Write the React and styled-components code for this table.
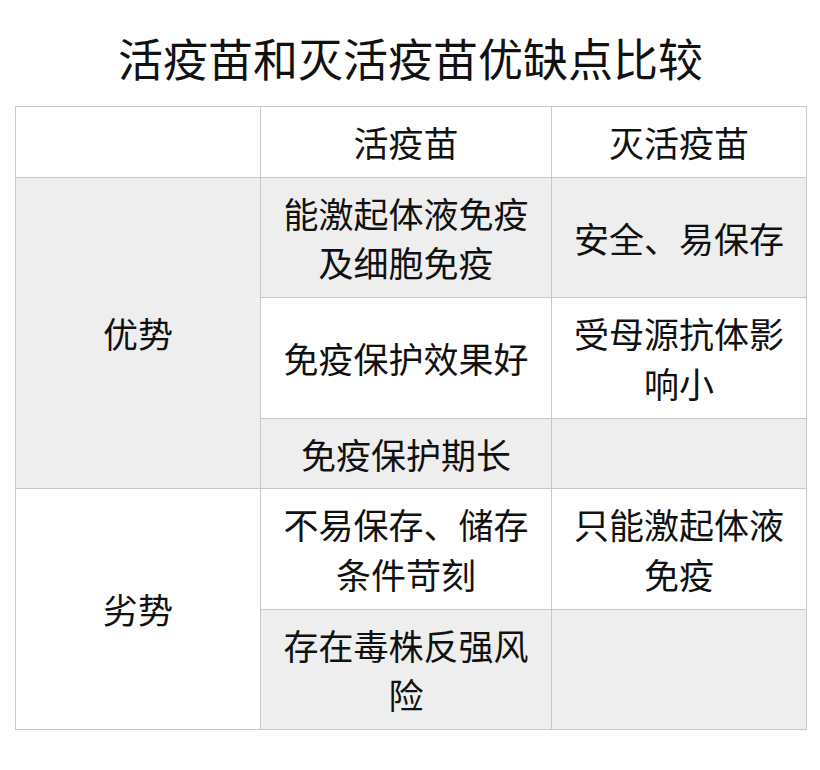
import React from "react";
import styled, { createGlobalStyle } from "styled-components";

const Global = createGlobalStyle`
  html, body { margin: 0; padding: 0; background: #fff; }
  body { font-family: "Noto Sans CJK SC", "Noto Sans", sans-serif; color: #111; }
`;

const Page = styled.div`
  width: 820px;
  padding: 28px 14px 0 15px;
  box-sizing: border-box;
`;

const Title = styled.h1`
  margin: 0 0 18px;
  font-size: 45px;
  line-height: 60px;
  font-weight: 400;
  text-align: center;
`;

const Table = styled.table`
  border-collapse: collapse;
  table-layout: fixed;
  width: 791px;
`;

const Cell = styled.td`
  border: 1px solid #c8c8c8;
  background: ${(p) => (p.$gray ? "#eeeeee" : "#ffffff")};
  padding: 10px 12px;
  font-size: 35px;
  line-height: 49.7px;
  text-align: center;
  vertical-align: middle;
  font-weight: 400;
`;

export default function App() {
  return (
    <>
      <Global />
      <Page>
        <Title>活疫苗和灭活疫苗优缺点比较</Title>
        <Table>
          <colgroup>
            <col style={{ width: 245 }} />
            <col style={{ width: 291 }} />
            <col style={{ width: 255 }} />
          </colgroup>
          <tbody>
            <tr>
              <Cell></Cell>
              <Cell>活疫苗</Cell>
              <Cell>灭活疫苗</Cell>
            </tr>
            <tr>
              <Cell rowSpan={3} $gray>优势</Cell>
              <Cell $gray>能激起体液免疫及细胞免疫</Cell>
              <Cell $gray>安全、易保存</Cell>
            </tr>
            <tr>
              <Cell>免疫保护效果好</Cell>
              <Cell>受母源抗体影响小</Cell>
            </tr>
            <tr>
              <Cell $gray>免疫保护期长</Cell>
              <Cell $gray></Cell>
            </tr>
            <tr>
              <Cell rowSpan={2}>劣势</Cell>
              <Cell>不易保存、储存条件苛刻</Cell>
              <Cell>只能激起体液免疫</Cell>
            </tr>
            <tr>
              <Cell $gray>存在毒株反强风险</Cell>
              <Cell $gray></Cell>
            </tr>
          </tbody>
        </Table>
      </Page>
    </>
  );
}
